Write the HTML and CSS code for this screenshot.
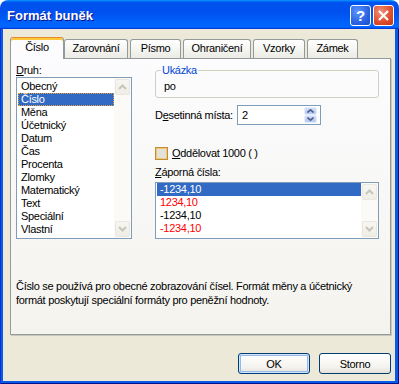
FILE: index.html
```html
<!DOCTYPE html>
<html lang="cs">
<head>
<meta charset="UTF-8">
<title>Formát buněk</title>
<link rel="stylesheet" href="styles.css">
</head>
<body>

<!-- dialog window -->
<div class="window">
  <!-- title bar -->
  <div class="titlebar">
    <span class="title">Formát buněk</span>
    <span class="tb-btn help">?</span>
    <span class="tb-btn close">
      <svg width="13" height="13" viewBox="0 0 13 13"><path d="M2 2 L11 11 M11 2 L2 11" stroke="#fff" stroke-width="2.2" fill="none"/></svg>
    </span>
  </div>

  <div class="frame">
    <div class="client">
      <!-- tabs -->
      <div class="tabs">
        <div class="tab active w-cislo">Číslo</div>
        <div class="tab w-zarov">Zarovnání</div>
        <div class="tab w-pismo">Písmo</div>
        <div class="tab w-ohran">Ohraničení</div>
        <div class="tab w-vzorky">Vzorky</div>
        <div class="tab w-zamek">Zámek</div>
      </div>

      <!-- tab page -->
      <div class="panel">
        <div class="panel-top">
          <div class="col-left">
            <div class="label"><u>D</u>ruh:</div>
            <div class="listbox kinds">
              <ul class="items">
                <li>Obecný</li>
                <li class="sel focus">Číslo</li>
                <li>Měna</li>
                <li>Účetnický</li>
                <li>Datum</li>
                <li>Čas</li>
                <li>Procenta</li>
                <li>Zlomky</li>
                <li>Matematický</li>
                <li>Text</li>
                <li>Speciální</li>
                <li>Vlastní</li>
              </ul>
              <div class="scrollbar">
                <span class="sb-btn"><svg width="9" height="6" viewBox="0 0 9 6"><path d="M1 5 L4.5 1.5 L8 5" stroke="#c8c6b8" stroke-width="2" fill="none"/></svg></span>
                <span class="sb-btn"><svg width="9" height="6" viewBox="0 0 9 6"><path d="M1 1 L4.5 4.5 L8 1" stroke="#c8c6b8" stroke-width="2" fill="none"/></svg></span>
              </div>
            </div>
          </div>

          <div class="col-right">
            <fieldset class="sample">
              <legend>Ukázka</legend>
              <div>po</div>
            </fieldset>

            <div class="row decimals">
              <span class="dec-label">D<u>e</u>setinná místa:</span>
              <div class="spin">
                <span>2</span>
                <div class="spin-btns">
                  <span class="spin-btn"><svg width="7" height="4" viewBox="0 0 7 4"><path d="M0.5 3.5 L3.5 0.8 L6.5 3.5" stroke="#4d6185" stroke-width="1.6" fill="none"/></svg></span>
                  <span class="spin-btn"><svg width="7" height="4" viewBox="0 0 7 4"><path d="M0.5 0.5 L3.5 3.2 L6.5 0.5" stroke="#4d6185" stroke-width="1.6" fill="none"/></svg></span>
                </div>
              </div>
            </div>

            <div class="row check">
              <span class="checkbox"></span>
              <span><u>O</u>ddělovat 1000 ( )</span>
            </div>

            <div class="label neg-label"><u>Z</u>áporná čísla:</div>
            <div class="listbox negs">
              <ul class="items">
                <li class="sel">-1234,10</li>
                <li class="red">1234,10</li>
                <li>-1234,10</li>
                <li class="red">-1234,10</li>
              </ul>
              <div class="scrollbar">
                <span class="sb-btn"><svg width="9" height="6" viewBox="0 0 9 6"><path d="M1 5 L4.5 1.5 L8 5" stroke="#c8c6b8" stroke-width="2" fill="none"/></svg></span>
                <span class="sb-btn"><svg width="9" height="6" viewBox="0 0 9 6"><path d="M1 1 L4.5 4.5 L8 1" stroke="#c8c6b8" stroke-width="2" fill="none"/></svg></span>
              </div>
            </div>
          </div>
        </div>

        <p class="desc">Číslo se používá pro obecné zobrazování čísel. Formát měny a účetnický formát poskytují speciální formáty pro peněžní hodnoty.</p>
      </div>

      <!-- buttons -->
      <div class="actions">
        <button class="btn default">OK</button>
        <button class="btn">Storno</button>
      </div>
    </div>
  </div>
</div>

</body>
</html>
```

FILE: styles.css
```css
/* reset */
*{box-sizing:border-box}
body{margin:0;background:#fff;font:11px/13px "Liberation Sans",Arial,sans-serif;letter-spacing:-0.3px;color:#000}
ul{margin:0;padding:0;list-style:none}
u{text-decoration:underline;text-underline-offset:1px}

/* window + title bar */
.window{width:399px;height:384px;display:flex;flex-direction:column}
.titlebar{height:29px;flex:none;display:flex;align-items:center;gap:2px;padding:1px 5px 0 7px;
  border-radius:8px 8px 0 0;
  background:linear-gradient(180deg,#0997ff,#0053ee 8%,#0050ee 40%,#06f 88%,#06f 93%,#005bff 95%,#003dd7 96%,#003dd7)}
.title{flex:1;color:#fff;font:bold 13px "Liberation Sans",Arial,sans-serif;letter-spacing:0;text-shadow:1px 1px #0f1089}
.tb-btn{width:21px;height:21px;border:1px solid #fff;border-radius:3px;display:flex;align-items:center;justify-content:center;color:#fff}
.help{background:radial-gradient(circle at 35% 30%,#5d97ff,#2a63e0 60%,#1a4cc8);font:bold 15px "Liberation Sans",Arial,sans-serif;letter-spacing:0}
.close{background:radial-gradient(circle at 35% 30%,#f0907a,#e0512f 55%,#c2341a)}

.frame{flex:1;display:flex;padding:0 4px 3px 3px;background:#0a5ae8;
  box-shadow:inset 1px 0 #0831d9,inset -1px 0 #00138c,inset 0 -1px #00138c}
.client{flex:1;background:#ece9d8;padding:8px 4px 0 7px;display:flex;flex-direction:column}

/* tabs */
.tabs{height:22px;display:flex;align-items:flex-end;margin-bottom:-1px;position:relative;z-index:1}
.tab{height:19px;margin:0 2px 1px 0;padding-top:2px;text-align:center;
  border:1px solid #919b9c;border-bottom:none;border-radius:3px 3px 0 0;
  background:linear-gradient(#fff,#f3f3ef 60%,#ecebe6)}
.tab.active{height:22px;margin:0;padding-top:3px;background:#fcfcfe;border-top-color:#e68b2c;
  box-shadow:inset 0 2px #ffc73c}
.w-cislo{width:54px}
.w-zarov{width:64px}
.w-pismo{width:51px}
.w-ohran{width:68px}
.w-vzorky{width:52px}
.w-zamek{width:51px}

/* tab page */
.panel{height:277px;border:1px solid #919b9c;background:linear-gradient(#fcfcfe,#f4f3ee);
  box-shadow:1px 1px #c9c7ba;padding:5px 0 0 5px}
.panel-top{display:grid;grid-template-columns:116px 224px;column-gap:23px}
.label{height:13px}

/* list boxes */
.listbox{display:flex;border:1px solid #7f9db9;background:#fff}
.kinds{height:162px}
.negs{height:57px;margin-top:3px}
.items{flex:1;padding:0 0 0 1px}
.kinds .items{padding-top:2px}
.items li{height:13px;padding-left:3px;white-space:nowrap}
.items li.sel{background:#316ac5;color:#fff}
.items li.focus{outline:1px dotted #e8a13a;outline-offset:-1px}
.items li.red{color:#f00}
.scrollbar{width:17px;padding:1px;display:flex;flex-direction:column;justify-content:space-between;background:#fbfaf6}
.sb-btn{height:16px;border:1px solid #e9e7df;border-radius:2px;background:linear-gradient(#f7f6f2,#efede6);
  display:flex;align-items:center;justify-content:center}

/* right column */
.sample{margin:0;padding:3px 8px 4px;border:1px solid #d0d0bf;border-radius:3px}
.sample legend{padding:0 1px;margin-left:-3px;color:#0046d5}
.row{display:flex;align-items:center}
.decimals{margin-top:7px;height:20px}
.dec-label{width:82px}
.spin{width:84px;height:20px;border:1px solid #7f9db9;background:#fff;display:flex;align-items:center;padding:0 3px 0 4px}
.spin-btns{margin-left:auto;display:flex;flex-direction:column;gap:0}
.spin-btn{width:13px;height:8px;border-radius:2px;background:linear-gradient(#d2dffc,#b5c8f3);
  border:1px solid #e6edfd;display:flex;align-items:center;justify-content:center}
.check{margin-top:22px;height:13px;gap:4px}
.checkbox{width:13px;height:13px;border:1px solid #bd8d42;background:#e3e2da;box-shadow:inset 0 0 0 1px #f6c66a}
.neg-label{margin-top:6px}

.desc{margin:40px 0 0;width:360px;line-height:14px}

/* bottom buttons */
.actions{display:flex;justify-content:flex-end;gap:9px;margin-top:18px}
.btn{width:72px;height:21px;padding:0;border:1px solid #003c74;border-radius:3px;
  font:11px "Liberation Sans",Arial,sans-serif;letter-spacing:-0.3px;color:#000;
  background:linear-gradient(#fff,#f4f3ee 70%,#e3e0d6)}
.btn.default{box-shadow:inset 0 0 0 1px #cee7ff,inset 0 0 0 2px #98b8ea}
```
